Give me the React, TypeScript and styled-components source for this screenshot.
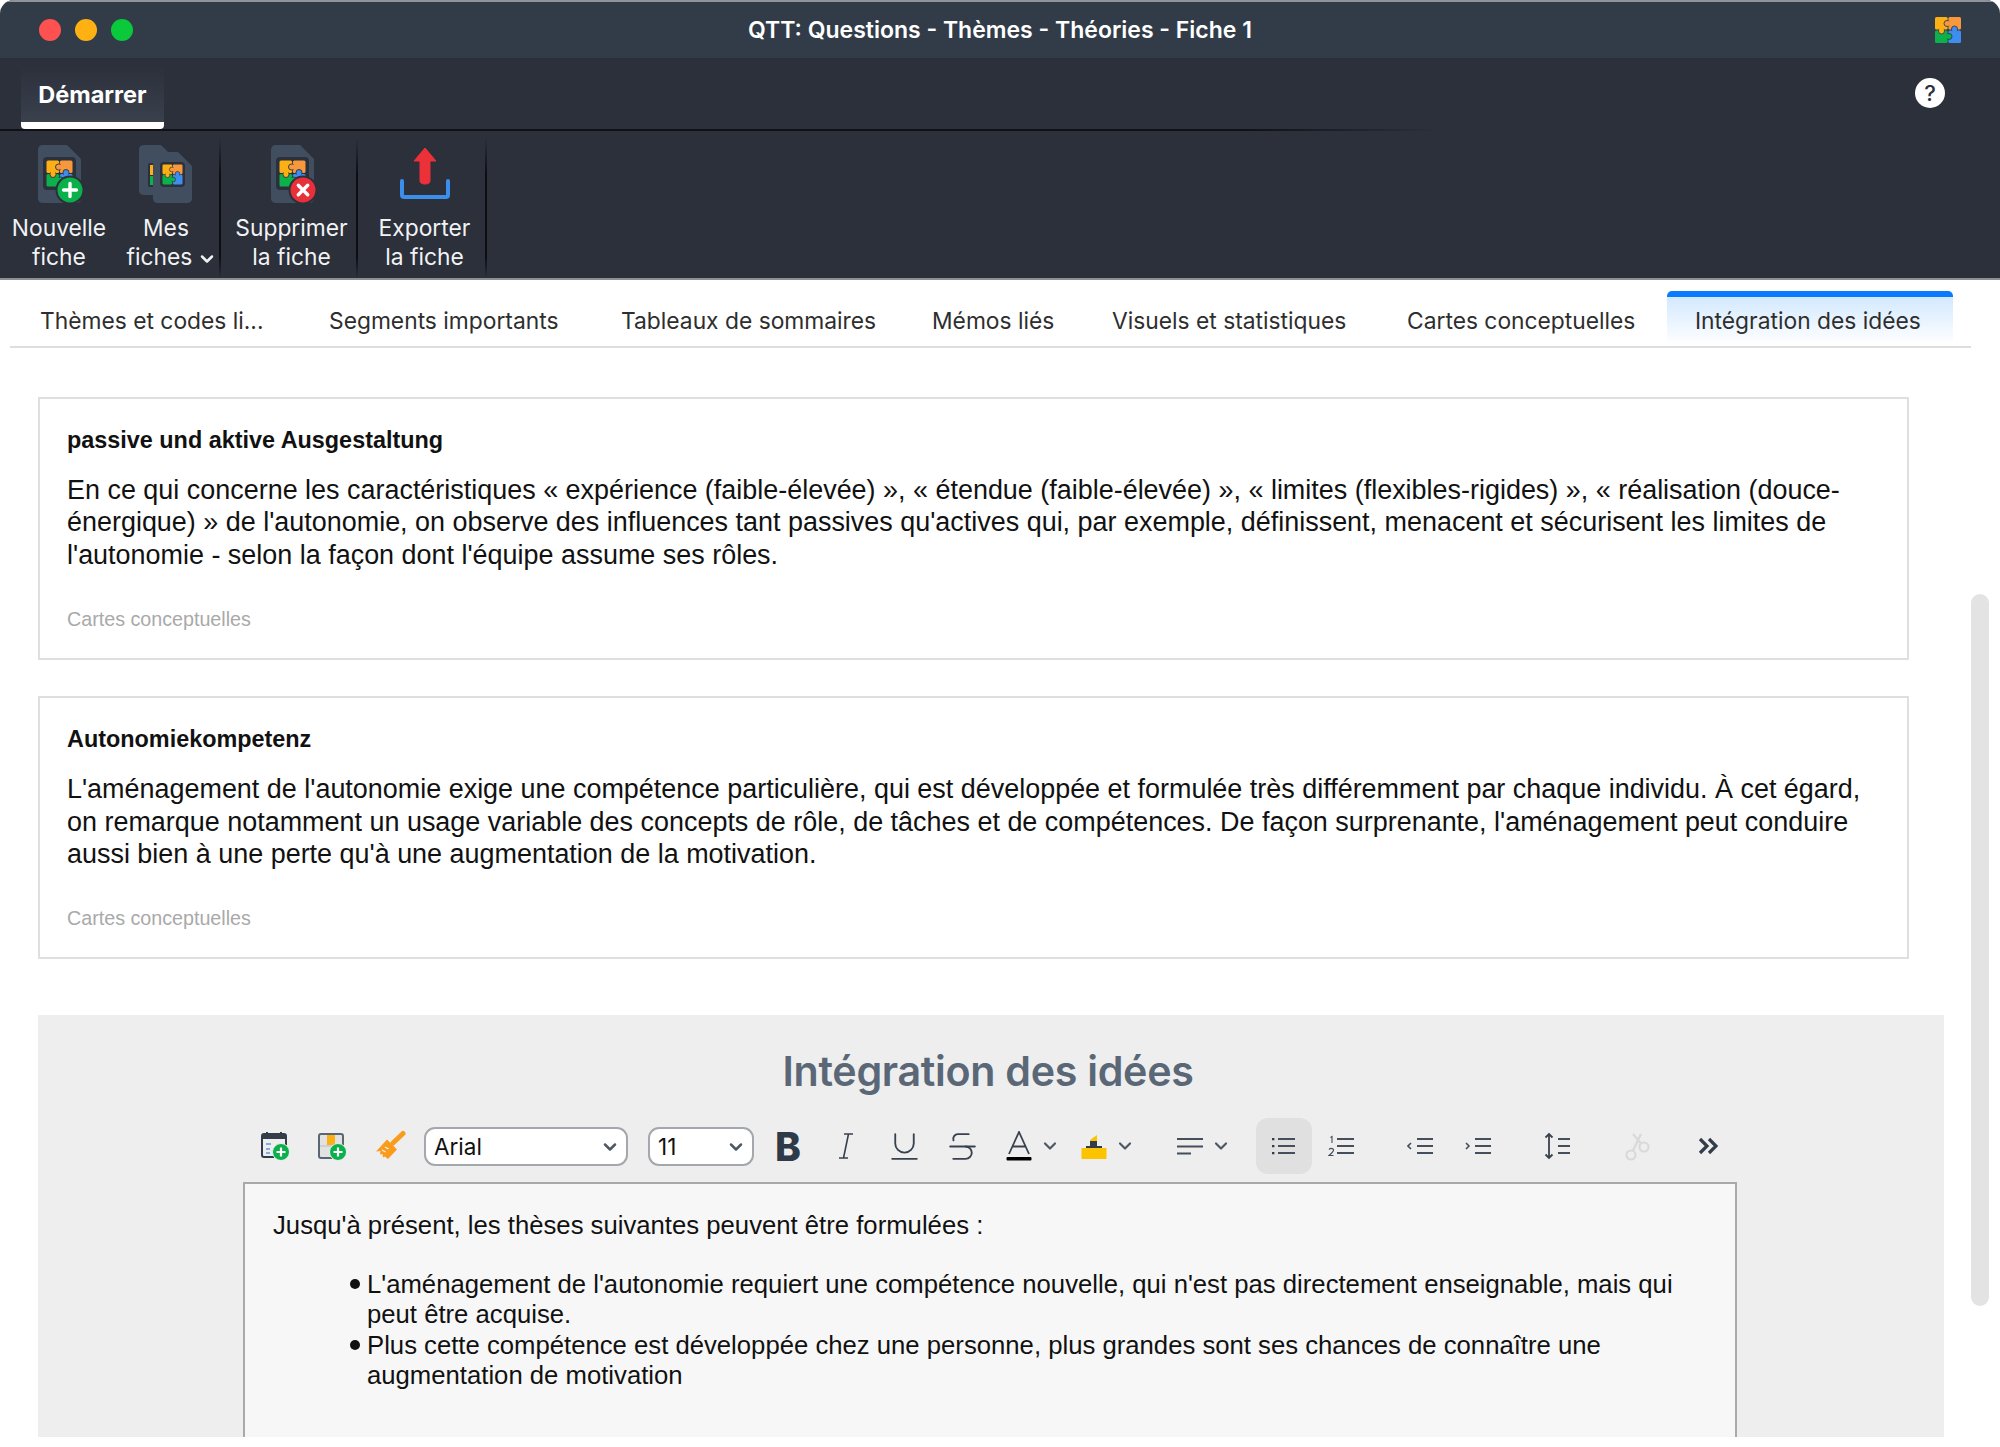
import * as React from 'react';
import styled, { createGlobalStyle } from 'styled-components';
import { Underline, Strikethrough, ChevronDown } from 'lucide-react';

const GlobalStyle = createGlobalStyle`
  html, body {
    margin: 0;
    background: #fff;
  }
  * {
    box-sizing: border-box;
  }
  #root {
    height: 1447px;
    overflow: hidden;
  }
`;

const Window = styled.div`
  height: 1437px;
  display: flex;
  flex-direction: column;
  border-radius: 14px 14px 0 0;
  overflow: hidden;
  font-family: Inter, 'Liberation Sans', sans-serif;
`;

const TitleBar = styled.div`
  height: 58px;
  flex: none;
  display: grid;
  grid-template-columns: 1fr auto 1fr;
  align-items: center;
  padding: 0 39px;
  background: #323c49;
  border-top: 2px solid #8f949b;
`;

const Lights = styled.div`
  display: flex;
  gap: 14px;
`;

const Light = styled.span<{ $color: string }>`
  width: 22px;
  height: 22px;
  border-radius: 50%;
  background: ${(props) => props.$color};
`;

const WindowTitle = styled.div`
  font-size: 23px;
  font-weight: 600;
  color: #fff;
`;

const AppLogo = styled.svg`
  width: 26px;
  height: 26px;
  justify-self: end;
`;

const RibbonTabs = styled.div`
  height: 73px;
  flex: none;
  display: flex;
  align-items: flex-end;
  justify-content: space-between;
  padding: 0 55px 0 21px;
  background: #2b303b;
  border-bottom: 2px solid;
  border-image: linear-gradient(to right, #0f1116 62%, #2b303b 72%) 1;
`;

const RibbonTab = styled.div`
  width: 143px;
  height: 64px;
  display: flex;
  align-items: center;
  justify-content: center;
  padding-top: 2px;
  font-size: 23.5px;
  font-weight: 700;
  color: #fff;
  background: linear-gradient(#2b303b, #3a404c);
  border-bottom: 7px solid #fff;
  border-radius: 0 0 4px 4px;
`;

const HelpButton = styled.div`
  width: 30px;
  height: 30px;
  margin-bottom: 21px;
  display: flex;
  align-items: center;
  justify-content: center;
  border-radius: 50%;
  background: #fff;
  color: #2b303b;
  font-size: 22px;
  font-weight: 500;
`;

const Ribbon = styled.div`
  height: 149px;
  flex: none;
  display: flex;
  background: #2b303b;
  border-bottom: 2px solid #8d9096;
`;

const RibbonButton = styled.div<{ $width: number; $left?: number; $right?: number; $divider?: boolean }>`
  width: ${(props) => props.$width}px;
  display: flex;
  flex-direction: column;
  align-items: center;
  padding: 14px ${(props) => props.$right ?? 0}px 0 ${(props) => props.$left ?? 0}px;
  font-size: 22.8px;
  line-height: 28.5px;
  color: #f1f2f4;
  text-align: center;
  border-right: ${(props) => (props.$divider ? '2px solid' : 'none')};
  border-image: linear-gradient(transparent 5%, #0c0e12 30%, #0c0e12 85%, transparent) 1;
`;

const RibbonIcon = styled.svg`
  height: 60px;
  flex: none;
  margin-bottom: 9px;
  display: block;
  overflow: visible;
`;

const RibbonLabel = styled.div`
  white-space: nowrap;
`;

const MenuLabel = styled(RibbonLabel)`
  margin-left: 12px;
`;

const LabelChevron = styled(ChevronDown)`
  width: 20px;
  height: 20px;
  margin-left: 5px;
  vertical-align: -4px;
`;

const Body = styled.div`
  flex: 1;
  min-height: 0;
  display: flex;
  padding: 0 11px 0 10px;
  background: #fff;
`;

const Main = styled.div`
  flex: 1;
  min-width: 0;
  display: flex;
  flex-direction: column;
`;

const TabBar = styled.div`
  height: 68px;
  flex: none;
  display: flex;
  align-items: stretch;
  padding-top: 11px;
  border-bottom: 2px solid #dedede;
`;

const Tab = styled.div<{ $width: number }>`
  width: ${(props) => props.$width}px;
  padding: 10px 0 0 30px;
  font-size: 22.8px;
  line-height: 40px;
  color: #2e2e2e;
  white-space: nowrap;
`;

const ActiveTab = styled.div`
  height: 54px;
  margin-left: 2px;
  padding: 4px 32px 0 28px;
  font-size: 22.8px;
  line-height: 40px;
  color: #2e2e2e;
  white-space: nowrap;
  background: linear-gradient(#d3e9ff, #ffffff);
  border-top: 6px solid #0a7bff;
  border-radius: 5px 5px 0 0;
`;

const Cards = styled.div`
  display: flex;
  flex-direction: column;
  gap: 36px;
  padding: 49px 0 56px 28px;
`;

const Card = styled.div`
  width: 1871px;
  padding: 27px 27px 25px;
  border: 2px solid #dfdfdf;
  font-family: 'Liberation Sans', Arial, sans-serif;
`;

const CardTitle = styled.div`
  font-size: 23.4px;
  line-height: 28px;
  font-weight: 700;
  color: #111;
`;

const CardText = styled.div`
  margin-top: 20px;
  font-size: 26.94px;
  line-height: 32.4px;
  color: #111;
`;

const CardSource = styled.div`
  margin-top: 34px;
  font-size: 19.7px;
  line-height: 28px;
  color: #a9a9a9;
`;

const EditorPanel = styled.div`
  flex: 1;
  min-height: 0;
  width: 1906px;
  margin-left: 28px;
  display: flex;
  flex-direction: column;
  padding: 31px 207px 0 205px;
  background: #eeeeee;
`;

const PanelTitle = styled.div`
  width: 1490px;
  font-size: 41.2px;
  line-height: 50px;
  font-weight: 600;
  color: #5a6776;
  text-align: center;
  letter-spacing: -0.3px;
`;

const Toolbar = styled.div`
  height: 56px;
  flex: none;
  display: flex;
  align-items: center;
  margin-top: 22px;
  padding-left: 3px;
`;

const ToolButton = styled.div<{ $width?: number; $offset?: number; $active?: boolean }>`
  width: ${(props) => props.$width ?? 58}px;
  height: 56px;
  flex: none;
  margin-left: ${(props) => props.$offset ?? 0}px;
  display: flex;
  align-items: center;
  justify-content: center;
  gap: 8px;
  color: #38424f;
  border-radius: 12px;
  background: ${(props) => (props.$active ? '#e0e0e0' : 'transparent')};
`;

const BoldGlyph = styled.span`
  font-size: 39px;
  line-height: 1;
  font-weight: 800;
  color: #2f3a48;
`;

const Select = styled.div<{ $width: number; $offset: number }>`
  width: ${(props) => props.$width}px;
  height: 39px;
  flex: none;
  margin-left: ${(props) => props.$offset}px;
  display: flex;
  align-items: center;
  justify-content: space-between;
  padding: 1px 6px 0 8px;
  background: #fff;
  border: 2px solid #a4a7ab;
  border-radius: 11px;
  font-size: 22.5px;
  color: #111;
`;

const SmallChevron = styled(ChevronDown)`
  width: 20px;
  height: 20px;
  flex: none;
  color: #4d5865;
`;

const ToolIcon = styled.svg`
  display: block;
  flex: none;
`;

const Editor = styled.div`
  flex: 1;
  min-height: 0;
  width: 1494px;
  margin-top: 8px;
  padding: 26px 40px 0 28px;
  background: #f7f7f7;
  border: 2px solid #a9a9a9;
  border-bottom: none;
  font-family: 'Liberation Sans', Arial, sans-serif;
  font-size: 25.7px;
  line-height: 30.5px;
  color: #111;
`;

const BulletList = styled.ul`
  margin: 28px 0 0;
  padding: 0 0 0 94px;
  list-style: none;
`;

const Bullet = styled.li`
  position: relative;
  &::before {
    content: '';
    position: absolute;
    left: -17px;
    top: 10px;
    width: 10px;
    height: 10px;
    border-radius: 50%;
    background: #111;
  }
`;

const ScrollTrack = styled.div`
  width: 18px;
  flex: none;
  padding-top: 314px;
`;

const ScrollThumb = styled.div`
  height: 712px;
  border-radius: 9px;
  background: #e3e3e3;
`;

// the four coloured pieces of the QTT logo, drawn on a 26x26 grid
const PuzzleGlyph = ({ gap }: { gap: string }) => (
  <>
    <rect x="0" y="0" width="12.6" height="12.6" rx="1.5" fill="#fdb016" />
    <rect x="13.4" y="0" width="12.6" height="12.6" rx="1.5" fill="#f7983c" />
    <rect x="0" y="13.4" width="12.6" height="12.6" rx="1.5" fill="#0cb14b" />
    <rect x="13.4" y="13.4" width="12.6" height="12.6" rx="1.5" fill="#3e8ef0" />
    <circle cx="6.5" cy="14" r="3" fill="#fdb016" stroke={gap} strokeWidth="0.9" />
    <rect x="4.2" y="10" width="4.6" height="3.6" fill="#fdb016" />
    <circle cx="12" cy="6.5" r="3" fill="#f7983c" stroke={gap} strokeWidth="0.9" />
    <rect x="12.4" y="4.2" width="3.6" height="4.6" fill="#f7983c" />
    <circle cx="19.5" cy="12" r="3" fill="#3e8ef0" stroke={gap} strokeWidth="0.9" />
    <rect x="17.2" y="12.4" width="4.6" height="3.6" fill="#3e8ef0" />
    <circle cx="14" cy="19.5" r="3" fill="#0cb14b" stroke={gap} strokeWidth="0.9" />
    <rect x="10" y="17.2" width="3.6" height="4.6" fill="#0cb14b" />
  </>
);

const FileShape = ({ x, y, w, h }: { x: number; y: number; w: number; h: number }) => (
  <path
    d={`M${x + 5} ${y}H${x + w - 14}L${x + w} ${y + 14}V${y + h - 5}Q${x + w} ${y + h} ${x + w - 5} ${y + h}H${x + 5}Q${x} ${y + h} ${x} ${y + h - 5}V${y + 5}Q${x} ${y} ${x + 5} ${y}Z`}
    fill="#414e60"
  />
);

const FileBadgeIcon = ({ kind }: { kind: 'add' | 'remove' }) => (
  <RibbonIcon viewBox="-2 0 46 60" style={{ width: 46 }}>
    <FileShape x={0} y={0} w={43} h={58} />
    <rect x="5" y="12" width="33" height="33" rx="4" fill="#2b303b" />
    <g transform="translate(8.5 15.5)">
      <PuzzleGlyph gap="#2b303b" />
    </g>
    <circle cx="32" cy="45" r="14.5" fill="#2b303b" />
    <circle cx="32" cy="45" r="12.5" fill={kind === 'add' ? '#0ab14b' : '#e8303a'} />
    {kind === 'add' ? (
      <path d="M32 38.5v13M25.5 45h13" stroke="#fff" strokeWidth="3.4" strokeLinecap="round" />
    ) : (
      <path d="M27.3 40.3l9.4 9.4M36.7 40.3l-9.4 9.4" stroke="#fff" strokeWidth="3.4" strokeLinecap="round" />
    )}
  </RibbonIcon>
);

const StackIcon = () => (
  <RibbonIcon viewBox="0 0 54 60" style={{ width: 54 }}>
    <FileShape x={0} y={0} w={36} h={50} />
    <rect x="9" y="18" width="16" height="24" rx="2" fill="#2b303b" />
    <rect x="11" y="20" width="10" height="10" fill="#fdb016" />
    <rect x="11" y="31" width="10" height="9" fill="#0cb14b" />
    <FileShape x={14} y={7} w={39} h={51} />
    <rect x="21" y="17" width="25" height="25" rx="4" fill="#2b303b" />
    <g transform="translate(23.5 19.5) scale(0.77)">
      <PuzzleGlyph gap="#2b303b" />
    </g>
  </RibbonIcon>
);

const ExportIcon = () => (
  <RibbonIcon viewBox="0 0 54 60" style={{ width: 54 }}>
    <path d="M27 3L38 16H32V36Q32 39 27 39Q22 39 22 36V16H16Z" fill="#ec3138" stroke="#ec3138" strokeLinejoin="round" />
    <path d="M4 36V50Q4 52 6 52H48Q50 52 50 50V36" fill="none" stroke="#3b8eea" strokeWidth="4" strokeLinecap="round" />
  </RibbonIcon>
);

const GreenPlus = ({ cx, cy }: { cx: number; cy: number }) => (
  <>
    <circle cx={cx} cy={cy} r="8.5" fill="#0ab14b" stroke="#eeeeee" strokeWidth="1" />
    <path d={`M${cx} ${cy - 4.5}v9M${cx - 4.5} ${cy}h9`} stroke="#fff" strokeWidth="2.2" />
  </>
);

const CalendarAddIcon = () => (
  <ToolIcon width="30" height="30" viewBox="0 0 30 30">
    <path d="M2 8V5Q2 3 4 3H24Q26 3 26 5V8Z" fill="#333d4a" />
    <path d="M7 1v4M21 1v4" stroke="#333d4a" strokeWidth="2" />
    <rect x="2" y="3" width="24" height="23" rx="2" fill="none" stroke="#333d4a" strokeWidth="2" />
    <path d="M6 13h5M6 18h4M6 22h4" stroke="#5a9be8" strokeWidth="1.6" />
    <GreenPlus cx={21} cy={21} />
  </ToolIcon>
);

const TableAddIcon = () => (
  <ToolIcon width="30" height="30" viewBox="1 0 30 30">
    <rect x="2" y="3" width="24" height="24" rx="2" fill="#e2e2e2" stroke="#5b6673" strokeWidth="2" />
    <rect x="10" y="4" width="8" height="11" fill="#fdb016" />
    <path d="M3 15H25" stroke="#cfcfcf" strokeWidth="2" />
    <GreenPlus cx={21} cy={21} />
  </ToolIcon>
);

const BrushIcon = () => (
  <ToolIcon width="30" height="32" viewBox="2 0 30 32">
    <path d="M29 3.5L19 13" stroke="#f99c1c" strokeWidth="5" strokeLinecap="round" />
    <path d="M13 9.5L23 19.5L14 29L11 26.5L9 27.5L8.5 24L6 24.5L6.5 21L2 21.5Z" fill="#f99c1c" />
    <path d="M8 20l3.5 2M11 17l3.5 2" stroke="#eeeeee" strokeWidth="1.4" />
  </ToolIcon>
);

const ItalicIcon = () => (
  <ToolIcon width="16" height="28" viewBox="0 0 16 28">
    <path d="M6 2H15M1 26H10M10.5 2L5.5 26" fill="none" stroke="#38424f" strokeWidth="1.6" />
  </ToolIcon>
);

const TextColorIcon = () => (
  <ToolIcon width="26" height="30" viewBox="0 0 26 30">
    <path d="M3 23L13 1L23 23M6.5 15.5H19.5" fill="none" stroke="#38424f" strokeWidth="1.8" />
    <rect x="0.5" y="26" width="25" height="3.5" rx="1" fill="#000" />
  </ToolIcon>
);

const HighlightIcon = () => (
  <ToolIcon width="26" height="28" viewBox="0 0 26 28">
    <path d="M9 8L16 3V9H9Z" fill="#fcc400" />
    <path d="M9 9H16V14H21V16H5V14H9Z" fill="#333d4a" />
    <rect x="0.5" y="16" width="25" height="11" fill="#fcc400" />
  </ToolIcon>
);

const AlignIcon = () => (
  <ToolIcon width="26" height="20" viewBox="0 0 26 20">
    <path d="M0 3H26M0 10.5H26M0 17.5H14" stroke="#454f5c" strokeWidth="2" />
  </ToolIcon>
);

const BulletsIcon = () => (
  <ToolIcon width="26" height="20" viewBox="0 0 26 20">
    <path d="M7 3H24M7 10H24M7 17H24" stroke="#454f5c" strokeWidth="1.8" />
    <path d="M1 2h2.4v2.2H1zM1 9h2.4v2.2H1zM1 16h2.4v2.2H1z" fill="#333d4a" />
  </ToolIcon>
);

const NumberedIcon = () => (
  <ToolIcon width="26" height="22" viewBox="0 0 26 22">
    <path d="M9 4H26M9 11H26M9 18H26" stroke="#454f5c" strokeWidth="1.8" />
    <path d="M2.5 2.5L4 1.5V8M1 14.5Q3 12.5 5 14T1 20.5H5.5" fill="none" stroke="#454f5c" strokeWidth="1.1" />
  </ToolIcon>
);

const OutdentIcon = () => (
  <ToolIcon width="26" height="20" viewBox="0 0 26 20">
    <path d="M10 3H26M10 10H26M10 17H26" stroke="#454f5c" strokeWidth="1.8" />
    <path d="M4 7L1 10L4 13" fill="none" stroke="#454f5c" strokeWidth="1.6" />
  </ToolIcon>
);

const IndentIcon = () => (
  <ToolIcon width="26" height="20" viewBox="0 0 26 20">
    <path d="M10 3H26M10 10H26M10 17H26" stroke="#454f5c" strokeWidth="1.8" />
    <path d="M1 7L4 10L1 13" fill="none" stroke="#454f5c" strokeWidth="1.6" />
  </ToolIcon>
);

const LineHeightIcon = () => (
  <ToolIcon width="26" height="28" viewBox="0 0 26 28">
    <path d="M14 7H26M14 14H26M14 21H26" stroke="#454f5c" strokeWidth="1.8" />
    <path d="M5 2V26M1.5 5.5L5 2L8.5 5.5M1.5 22.5L5 26L8.5 22.5" fill="none" stroke="#38424f" strokeWidth="1.8" />
  </ToolIcon>
);

const ScissorsIcon = () => (
  <ToolIcon width="26" height="30" viewBox="0 0 26 30">
    <circle cx="7" cy="24" r="4.5" fill="none" stroke="#d9d9d9" strokeWidth="2.2" />
    <circle cx="20" cy="16" r="4.5" fill="none" stroke="#d9d9d9" strokeWidth="2.2" />
    <path d="M9 19.5L17 3M17 12.5L9 3" fill="none" stroke="#d9d9d9" strokeWidth="2.2" />
  </ToolIcon>
);

const MoreIcon = () => (
  <ToolIcon width="20" height="18" viewBox="0 0 20 18">
    <path d="M2 2L9 9L2 16M11 2L18 9L11 16" fill="none" stroke="#333d4a" strokeWidth="3.2" />
  </ToolIcon>
);

const cards = [
  {
    title: 'passive und aktive Ausgestaltung',
    text: "En ce qui concerne les caractéristiques « expérience (faible-élevée) », « étendue (faible-élevée) », « limites (flexibles-rigides) », « réalisation (douce-énergique) » de l'autonomie, on observe des influences tant passives qu'actives qui, par exemple, définissent, menacent et sécurisent les limites de l'autonomie - selon la façon dont l'équipe assume ses rôles.",
  },
  {
    title: 'Autonomiekompetenz',
    text: "L'aménagement de l'autonomie exige une compétence particulière, qui est développée et formulée très différemment par chaque individu. À cet égard, on remarque notamment un usage variable des concepts de rôle, de tâches et de compétences. De façon surprenante, l'aménagement peut conduire aussi bien à une perte qu'à une augmentation de la motivation.",
  },
];

const tabs = [
  { label: 'Thèmes et codes li...', width: 289 },
  { label: 'Segments importants', width: 292 },
  { label: 'Tableaux de sommaires', width: 311 },
  { label: 'Mémos liés', width: 180 },
  { label: 'Visuels et statistiques', width: 295 },
  { label: 'Cartes conceptuelles', width: 288 },
];

const App: React.FC = () => {
  return (
    <>
      <GlobalStyle />
      <Window>
        <TitleBar>
          <Lights>
            <Light $color="#ff5150" />
            <Light $color="#ffb114" />
            <Light $color="#0ac93b" />
          </Lights>
          <WindowTitle>QTT: Questions - Thèmes - Théories - Fiche 1</WindowTitle>
          <AppLogo viewBox="0 0 26 26">
            <PuzzleGlyph gap="#323c49" />
          </AppLogo>
        </TitleBar>

        <RibbonTabs>
          <RibbonTab>Démarrer</RibbonTab>
          <HelpButton>?</HelpButton>
        </RibbonTabs>

        <Ribbon>
          <RibbonButton $width={118}>
            <FileBadgeIcon kind="add" />
            <RibbonLabel>Nouvelle</RibbonLabel>
            <RibbonLabel>fiche</RibbonLabel>
          </RibbonButton>
          <RibbonButton $width={103} $right={5} $divider>
            <StackIcon />
            <RibbonLabel>Mes</RibbonLabel>
            <MenuLabel>
              fiches
              <LabelChevron strokeWidth={3} />
            </MenuLabel>
          </RibbonButton>
          <RibbonButton $width={137} $left={6} $divider>
            <FileBadgeIcon kind="remove" />
            <RibbonLabel>Supprimer</RibbonLabel>
            <RibbonLabel>la fiche</RibbonLabel>
          </RibbonButton>
          <RibbonButton $width={129} $left={6} $divider>
            <ExportIcon />
            <RibbonLabel>Exporter</RibbonLabel>
            <RibbonLabel>la fiche</RibbonLabel>
          </RibbonButton>
        </Ribbon>

        <Body>
          <Main>
            <TabBar>
              {tabs.map((tab) => (
                <Tab key={tab.label} $width={tab.width}>
                  {tab.label}
                </Tab>
              ))}
              <ActiveTab>Intégration des idées</ActiveTab>
            </TabBar>

            <Cards>
              {cards.map((card) => (
                <Card key={card.title}>
                  <CardTitle>{card.title}</CardTitle>
                  <CardText>{card.text}</CardText>
                  <CardSource>Cartes conceptuelles</CardSource>
                </Card>
              ))}
            </Cards>

            <EditorPanel>
              <PanelTitle>Intégration des idées</PanelTitle>
              <Toolbar>
                <ToolButton>
                  <CalendarAddIcon />
                </ToolButton>
                <ToolButton>
                  <TableAddIcon />
                </ToolButton>
                <ToolButton>
                  <BrushIcon />
                </ToolButton>
                <Select $width={204} $offset={4}>
                  Arial
                  <SmallChevron strokeWidth={3} />
                </Select>
                <Select $width={106} $offset={20}>
                  11
                  <SmallChevron strokeWidth={3} />
                </Select>
                <ToolButton $offset={5}>
                  <BoldGlyph>B</BoldGlyph>
                </ToolButton>
                <ToolButton>
                  <ItalicIcon />
                </ToolButton>
                <ToolButton>
                  <Underline size={37} strokeWidth={1.2} />
                </ToolButton>
                <ToolButton>
                  <Strikethrough size={37} strokeWidth={1.2} />
                </ToolButton>
                <ToolButton $width={80} $offset={2}>
                  <TextColorIcon />
                  <SmallChevron strokeWidth={2.6} />
                </ToolButton>
                <ToolButton $width={70}>
                  <HighlightIcon />
                  <SmallChevron strokeWidth={2.6} />
                </ToolButton>
                <ToolButton $width={80} $offset={21}>
                  <AlignIcon />
                  <SmallChevron strokeWidth={2.6} />
                </ToolButton>
                <ToolButton $width={56} $offset={12} $active>
                  <BulletsIcon />
                </ToolButton>
                <ToolButton>
                  <NumberedIcon />
                </ToolButton>
                <ToolButton $offset={21}>
                  <OutdentIcon />
                </ToolButton>
                <ToolButton>
                  <IndentIcon />
                </ToolButton>
                <ToolButton $offset={21}>
                  <LineHeightIcon />
                </ToolButton>
                <ToolButton $offset={22}>
                  <ScissorsIcon />
                </ToolButton>
                <ToolButton $offset={13}>
                  <MoreIcon />
                </ToolButton>
              </Toolbar>
              <Editor>
                Jusqu'à présent, les thèses suivantes peuvent être formulées :
                <BulletList>
                  <Bullet>
                    L'aménagement de l'autonomie requiert une compétence nouvelle, qui n'est pas directement enseignable, mais qui peut être acquise.
                  </Bullet>
                  <Bullet>
                    Plus cette compétence est développée chez une personne, plus grandes sont ses chances de connaître une augmentation de motivation
                  </Bullet>
                </BulletList>
              </Editor>
            </EditorPanel>
          </Main>
          <ScrollTrack>
            <ScrollThumb />
          </ScrollTrack>
        </Body>
      </Window>
    </>
  );
};

export default App;
